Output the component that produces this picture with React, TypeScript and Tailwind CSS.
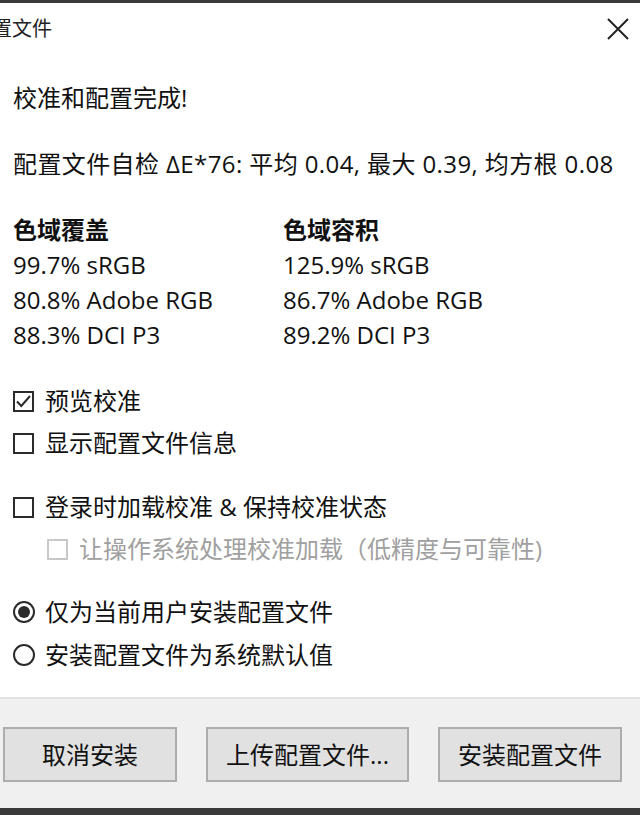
import React from 'react';

const font = { fontFamily: '"Open Sans", "Noto Sans CJK SC", sans-serif' };

const CheckBox = ({ checked, disabled }: { checked?: boolean; disabled?: boolean }) => (
  <span
    className={`flex items-center justify-center w-[21px] h-[21px] border-2 bg-white shrink-0 ${
      disabled ? 'border-[#c8c8c8]' : 'border-[#2b2b2b]'
    }`}
  >
    {checked && (
      <svg width="17" height="17" viewBox="0 0 17 17">
        <path d="M2 8.5 L6.3 13 L15 3" fill="none" stroke="#2b2b2b" strokeWidth="2" />
      </svg>
    )}
  </span>
);

const Radio = ({ checked }: { checked?: boolean }) => (
  <span className="flex items-center justify-center w-[22px] h-[22px] rounded-full border-2 border-[#2b2b2b] bg-white shrink-0">
    {checked && <span className="w-[12px] h-[12px] rounded-full bg-[#2b2b2b]" />}
  </span>
);

const Btn = ({ label, w }: { label: string; w: string }) => (
  <button className={`${w} h-[55px] bg-[#e1e1e1] border-2 border-[#adadad] text-[24px] text-[#111]`}>{label}</button>
);

export default function App() {
  return (
    <div className="w-[640px] h-[815px] bg-[#3a3a3a] flex flex-col overflow-hidden" style={font}>
      <div className="mt-[3px] flex-1 bg-white flex flex-col text-[#111]">
        {/* Title */}
        <div className="h-[52px] flex items-center justify-between overflow-hidden">
          <span className="text-[20px] -ml-[28px] text-[#222]">配置文件</span>
          <svg className="mr-[10px]" width="24" height="24" viewBox="0 0 24 24">
            <path d="M2 2 L22 22 M22 2 L2 22" stroke="#222" strokeWidth="2" />
          </svg>
        </div>

        <div className="flex-1 flex flex-col pl-[13px] text-[24px] leading-[34px]">
          <div className="mt-[26px]">校准和配置完成!</div>
          <div className="mt-[32px] tracking-[0.4px]">配置文件自检 ΔE*76: 平均 0.04, 最大 0.39, 均方根 0.08</div>

          <div className="mt-[31px] grid grid-cols-[270px_1fr] leading-[35px]">
            <div className="font-bold">色域覆盖</div>
            <div className="font-bold">色域容积</div>
            <div>99.7% sRGB</div>
            <div>125.9% sRGB</div>
            <div>80.8% Adobe RGB</div>
            <div>86.7% Adobe RGB</div>
            <div>88.3% DCI P3</div>
            <div>89.2% DCI P3</div>
          </div>

          <label className="mt-[32px] flex items-center gap-[11px] h-[34px]">
            <CheckBox checked />
            <span>预览校准</span>
          </label>
          <label className="mt-[8px] flex items-center gap-[11px] h-[34px]">
            <CheckBox />
            <span>显示配置文件信息</span>
          </label>
          <label className="mt-[30px] flex items-center gap-[11px] h-[34px]">
            <CheckBox />
            <span>登录时加载校准 &amp; 保持校准状态</span>
          </label>
          <label className="mt-[8px] ml-[34px] flex items-center gap-[11px] h-[34px] text-[#a0a0a0]">
            <CheckBox disabled />
            <span>让操作系统处理校准加载（低精度与可靠性)</span>
          </label>

          <label className="mt-[29px] flex items-center gap-[10px] h-[34px]">
            <Radio checked />
            <span>仅为当前用户安装配置文件</span>
          </label>
          <label className="mt-[9px] flex items-center gap-[10px] h-[34px]">
            <Radio />
            <span>安装配置文件为系统默认值</span>
          </label>
        </div>

        {/* Footer */}
        <div className="h-[111px] bg-[#f0f0f0] border-t-2 border-[#e3e3e3] flex items-start pt-[28px] pl-[3px] gap-[29px]">
          <Btn label="取消安装" w="w-[174px]" />
          <Btn label="上传配置文件..." w="w-[203px]" />
          <Btn label="安装配置文件" w="w-[184px]" />
        </div>
      </div>
      <div className="h-[7px]" />
    </div>
  );
}
